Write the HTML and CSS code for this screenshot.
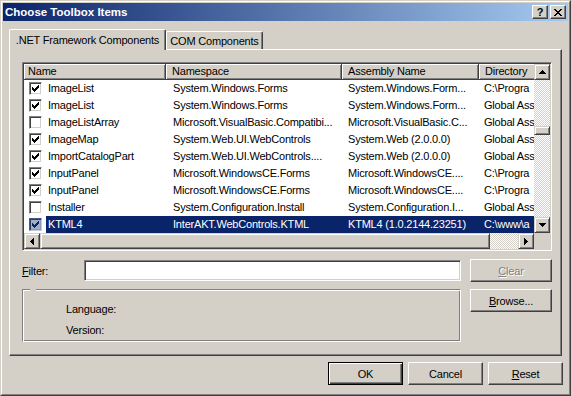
FILE: index.html
```html
<!DOCTYPE html>
<html lang="en">
<head>
    <meta charset="UTF-8">
    <title>Choose Toolbox Items</title>
    <link rel="stylesheet" href="styles.css">
</head>
<body>
    <div class="window">
        <div class="frame">
            <div class="titlebar">
                <span class="title">Choose Toolbox Items</span>
                <div class="caption-buttons">
                    <div class="cap-btn help">?</div>
                    <div class="cap-btn">
                        <svg width="8" height="7" viewBox="0 0 8 7"><path d="M0 0h2v1h1v1h2V1h1V0h2v1H7v1H6v1H5v1h1v1h1v1h1v1H6V6H5V5H3v1H2v1H0V6h1V5h1V4h1V3H2V2H1V1H0z" fill="#000"/></svg>
                    </div>
                </div>
            </div>

            <div class="tabs">
                <div class="tab active">.NET Framework Components</div>
                <div class="tab">COM Components</div>
            </div>

            <div class="tab-panel">
                <div class="listview">
                    <div class="lv-content">
                        <div class="lv-header">
                            <div class="hcell col-name">Name</div>
                            <div class="hcell col-ns">Namespace</div>
                            <div class="hcell col-asm">Assembly Name</div>
                            <div class="hcell col-dir">Directory</div>
                        </div>

                        <div class="row">
                            <div class="c-check"><span class="check on"></span></div>
                            <div class="cell col-label">ImageList</div>
                            <div class="cell col-ns">System.Windows.Forms</div>
                            <div class="cell col-asm">System.Windows.Form...</div>
                            <div class="cell col-dir">C:\Progra</div>
                        </div>
                        <div class="row">
                            <div class="c-check"><span class="check on"></span></div>
                            <div class="cell col-label">ImageList</div>
                            <div class="cell col-ns">System.Windows.Forms</div>
                            <div class="cell col-asm">System.Windows.Form...</div>
                            <div class="cell col-dir">Global Ass</div>
                        </div>
                        <div class="row">
                            <div class="c-check"><span class="check"></span></div>
                            <div class="cell col-label">ImageListArray</div>
                            <div class="cell col-ns">Microsoft.VisualBasic.Compatibi...</div>
                            <div class="cell col-asm">Microsoft.VisualBasic.C...</div>
                            <div class="cell col-dir">Global Ass</div>
                        </div>
                        <div class="row">
                            <div class="c-check"><span class="check on"></span></div>
                            <div class="cell col-label">ImageMap</div>
                            <div class="cell col-ns">System.Web.UI.WebControls</div>
                            <div class="cell col-asm">System.Web (2.0.0.0)</div>
                            <div class="cell col-dir">Global Ass</div>
                        </div>
                        <div class="row">
                            <div class="c-check"><span class="check on"></span></div>
                            <div class="cell col-label">ImportCatalogPart</div>
                            <div class="cell col-ns">System.Web.UI.WebControls....</div>
                            <div class="cell col-asm">System.Web (2.0.0.0)</div>
                            <div class="cell col-dir">Global Ass</div>
                        </div>
                        <div class="row">
                            <div class="c-check"><span class="check on"></span></div>
                            <div class="cell col-label">InputPanel</div>
                            <div class="cell col-ns">Microsoft.WindowsCE.Forms</div>
                            <div class="cell col-asm">Microsoft.WindowsCE....</div>
                            <div class="cell col-dir">C:\Progra</div>
                        </div>
                        <div class="row">
                            <div class="c-check"><span class="check on"></span></div>
                            <div class="cell col-label">InputPanel</div>
                            <div class="cell col-ns">Microsoft.WindowsCE.Forms</div>
                            <div class="cell col-asm">Microsoft.WindowsCE....</div>
                            <div class="cell col-dir">C:\Progra</div>
                        </div>
                        <div class="row">
                            <div class="c-check"><span class="check"></span></div>
                            <div class="cell col-label">Installer</div>
                            <div class="cell col-ns">System.Configuration.Install</div>
                            <div class="cell col-asm">System.Configuration.I...</div>
                            <div class="cell col-dir">Global Ass</div>
                        </div>
                        <div class="row selected">
                            <div class="c-check"><span class="check on"></span></div>
                            <div class="cell col-label">KTML4</div>
                            <div class="cell col-ns">InterAKT.WebControls.KTML</div>
                            <div class="cell col-asm">KTML4 (1.0.2144.23251)</div>
                            <div class="cell col-dir">C:\www\a</div>
                        </div>
                    </div>

                    <div class="vscroll">
                        <div class="sb-btn">
                            <svg width="7" height="4" viewBox="0 0 7 4"><path d="M3 0h1v1h1v1h1v1h1v1H0V3h1V2h1V1h1z"/></svg>
                        </div>
                        <div class="sb-track">
                            <div class="sb-thumb v-thumb"></div>
                        </div>
                        <div class="sb-btn">
                            <svg width="7" height="4" viewBox="0 0 7 4"><path d="M0 0h7v1H6v1H5v1H4v1H3V3H2V2H1V1H0z"/></svg>
                        </div>
                    </div>

                    <div class="hscroll">
                        <div class="sb-btn">
                            <svg width="4" height="7" viewBox="0 0 4 7"><path d="M3 0h1v7H3V6H2V5H1V4H0V3h1V2h1V1h1z"/></svg>
                        </div>
                        <div class="sb-thumb h-thumb"></div>
                        <div class="sb-track"></div>
                        <div class="sb-btn">
                            <svg width="4" height="7" viewBox="0 0 4 7"><path d="M0 0h1v1h1v1h1v1h1v1H3v1H2v1H1v1H0z"/></svg>
                        </div>
                    </div>

                    <div class="sb-corner"></div>
                </div>

                <div class="filter-row">
                    <label class="filter-label"><u>F</u>ilter:</label>
                    <div class="textbox"></div>
                    <div class="btn side-btn disabled"><u>C</u>lear</div>
                </div>

                <div class="info-row">
                    <div class="groupbox">
                        <div class="info-line">Language:</div>
                        <div class="info-line">Version:</div>
                    </div>
                    <div class="btn side-btn"><u>B</u>rowse...</div>
                </div>
            </div>

            <div class="dialog-buttons">
                <div class="btn default">OK</div>
                <div class="btn">Cancel</div>
                <div class="btn"><u>R</u>eset</div>
            </div>
        </div>
    </div>
</body>
</html>
```

FILE: styles.css
```css
/* classic grey dialog */
:root {
    --face: #d4d0c8;
    --shadow: #808080;
    --dark: #404040;
    --select: #0a246a;
}

* {
    box-sizing: border-box;
}

body {
    margin: 0;
    background: var(--face);
    font-family: 'Liberation Sans', Arial, sans-serif;
    font-size: 11px;
    letter-spacing: -0.2px;
    color: #000;
}

u {
    text-decoration: underline;
    text-underline-offset: 1px;
}

.window {
    width: 571px;
    height: 396px;
    border: 1px solid;
    border-color: var(--face) var(--dark) var(--dark) var(--face);
}

.frame {
    height: 100%;
    border: 1px solid;
    border-color: #fff var(--shadow) var(--shadow) #fff;
    padding: 1px;
}

/* title bar */
.titlebar {
    height: 18px;
    display: flex;
    align-items: center;
    justify-content: space-between;
    padding: 0 2px;
    background: linear-gradient(to right, #0a246a, #a6caf0);
}

.title {
    color: #fff;
    font-weight: bold;
    font-size: 11.5px;
    letter-spacing: 0;
}

.caption-buttons {
    display: flex;
    gap: 2px;
}

.cap-btn {
    width: 16px;
    height: 14px;
    display: flex;
    align-items: center;
    justify-content: center;
    background: var(--face);
    border: 1px solid;
    border-color: #fff var(--dark) var(--dark) #fff;
    box-shadow: inset -1px -1px var(--shadow);
    font-weight: bold;
    font-size: 11px;
    line-height: 12px;
}

.cap-btn.help {
    padding-bottom: 1px;
}

/* tabs */
.tabs {
    display: flex;
    align-items: flex-end;
    height: 28px;
    padding-left: 6px;
}

.tab {
    height: 18px;
    width: 97px;
    display: flex;
    align-items: center;
    justify-content: center;
    padding-top: 1px;
    border-top: 1px solid #fff;
    border-left: 1px solid #fff;
    border-right: 1px solid var(--dark);
    box-shadow: inset -1px 0 var(--shadow);
    border-radius: 2px 2px 0 0;
}

.tab.active {
    width: 157px;
    height: 21px;
    margin-bottom: -1px;
    padding-top: 0;
    background: var(--face);
    position: relative;
    z-index: 1;
}

.tab-panel {
    width: 553px;
    height: 307px;
    margin-left: 6px;
    padding: 12px 0 0 12px;
    border: 1px solid;
    border-color: #fff var(--dark) var(--dark) #fff;
    box-shadow: inset -1px -1px var(--shadow);
}

/* list view */
.listview {
    width: 530px;
    height: 189px;
    padding: 1px;
    display: grid;
    grid-template-columns: 510px 16px;
    grid-template-rows: 169px 16px;
    background: #fff;
    border: 1px solid;
    border-color: var(--shadow) #fff #fff var(--shadow);
    box-shadow: inset 1px 1px var(--dark), inset -1px -1px var(--face);
}

.lv-content {
    overflow: hidden;
}

.lv-header {
    display: flex;
    height: 16px;
    width: 520px;
}

.hcell {
    flex: none;
    height: 16px;
    line-height: 14px;
    padding-left: 6px;
    background: var(--face);
    border-right: 1px solid var(--dark);
    border-bottom: 1px solid var(--dark);
    box-shadow: inset 1px 1px #fff, inset -1px -1px var(--shadow);
    white-space: nowrap;
    overflow: hidden;
}

.hcell.col-name {
    width: 142px;
    padding-left: 4px;
}

.col-ns { width: 176px; }
.col-asm { width: 137px; }
.col-dir { width: 65px; }

.row {
    display: flex;
    height: 17px;
    width: 520px;
}

.c-check {
    width: 22px;
    flex: none;
    display: flex;
    align-items: center;
    padding-left: 5px;
}

.cell {
    flex: none;
    line-height: 17px;
    padding-left: 7px;
    white-space: nowrap;
    overflow: hidden;
}

.cell.col-label {
    width: 120px;
    padding-left: 2px;
}

.cell.col-asm { padding-left: 6px; }
.cell.col-dir { padding-left: 5px; }

.row.selected .cell {
    background: var(--select);
    color: #fff;
}

.check {
    width: 13px;
    height: 13px;
    background: #fff;
    border: 1px solid;
    border-color: var(--shadow) #fff #fff var(--shadow);
    box-shadow: inset 1px 1px var(--dark), inset -1px -1px var(--face);
}

.check.on {
    background: #fff url("data:image/svg+xml,%3Csvg xmlns='http://www.w3.org/2000/svg' width='7' height='7'%3E%3Cpath d='M6 0h1v1H6zM5 1h2v1H5zM0 2h1v1H0zM4 2h3v1H4zM0 3h2v1H0zM3 3h3v1H3zM0 4h5v1H0zM1 5h3v1H1zM2 6h1v1H2z'/%3E%3C/svg%3E") no-repeat 2px 2px;
}

.row.selected .check {
    background-color: #a4adc6;
    border-color: #4a5a86 #c2c8da #c2c8da #4a5a86;
    box-shadow: inset 1px 1px #2a3a6a, inset -1px -1px #8d98b8;
    background-image: url("data:image/svg+xml,%3Csvg xmlns='http://www.w3.org/2000/svg' width='7' height='7'%3E%3Cpath fill='%230a246a' d='M6 0h1v1H6zM5 1h2v1H5zM0 2h1v1H0zM4 2h3v1H4zM0 3h2v1H0zM3 3h3v1H3zM0 4h5v1H0zM1 5h3v1H1zM2 6h1v1H2z'/%3E%3C/svg%3E");
}

/* scroll bars */
.vscroll {
    display: flex;
    flex-direction: column;
}

.hscroll {
    display: flex;
}

.sb-btn {
    width: 16px;
    height: 16px;
    flex: none;
    display: flex;
    align-items: center;
    justify-content: center;
    background: var(--face);
    border: 1px solid;
    border-color: var(--face) var(--dark) var(--dark) var(--face);
    box-shadow: inset 1px 1px #fff, inset -1px -1px var(--shadow);
}

.sb-track {
    flex: 1;
    background: repeating-conic-gradient(var(--face) 0 25%, #fff 0 50%) 0 0 / 2px 2px;
}

.sb-thumb {
    background: var(--face);
    border: 1px solid;
    border-color: var(--face) var(--dark) var(--dark) var(--face);
    box-shadow: inset 1px 1px #fff, inset -1px -1px var(--shadow);
}

.v-thumb {
    height: 9px;
    margin-top: 46px;
}

.h-thumb {
    width: 450px;
    flex: none;
}

.sb-corner {
    background: var(--face);
}

/* filter + info */
.filter-row {
    display: flex;
    align-items: center;
    height: 23px;
    margin-top: 8px;
}

.filter-label {
    width: 62px;
    flex: none;
}

.textbox {
    width: 377px;
    height: 21px;
    margin-right: 9px;
    background: #fff;
    border: 1px solid;
    border-color: var(--shadow) #fff #fff var(--shadow);
    box-shadow: inset 1px 1px var(--dark), inset -1px -1px var(--face);
}

.info-row {
    display: flex;
    align-items: flex-start;
    margin-top: 7px;
}

.groupbox {
    position: relative;
    width: 439px;
    height: 53px;
    margin-right: 9px;
    padding: 12px 0 0 43px;
    border: 1px solid;
    border-color: var(--shadow) #fff #fff var(--shadow);
    box-shadow: inset 1px 1px #fff, inset -1px -1px var(--shadow);
}

.groupbox::before {
    content: '';
    position: absolute;
    left: 7px;
    top: -1px;
    width: 6px;
    height: 2px;
    background: var(--face);
}

.info-line {
    line-height: 14px;
}

.info-line + .info-line {
    margin-top: 7px;
}

/* buttons */
.btn {
    width: 75px;
    height: 23px;
    display: flex;
    align-items: center;
    justify-content: center;
    background: var(--face);
    border: 1px solid;
    border-color: #fff var(--dark) var(--dark) #fff;
    box-shadow: inset -1px -1px var(--shadow);
}

.btn.default {
    border-color: #000;
    box-shadow: inset 1px 1px #fff, inset -1px -1px var(--dark), inset -2px -2px var(--shadow);
}

.side-btn {
    width: 82px;
}

.btn.disabled {
    color: var(--shadow);
    text-shadow: 1px 1px #fff;
}

.dialog-buttons {
    display: flex;
    justify-content: flex-end;
    gap: 5px;
    margin-top: 6px;
    padding-right: 5px;
}
```
